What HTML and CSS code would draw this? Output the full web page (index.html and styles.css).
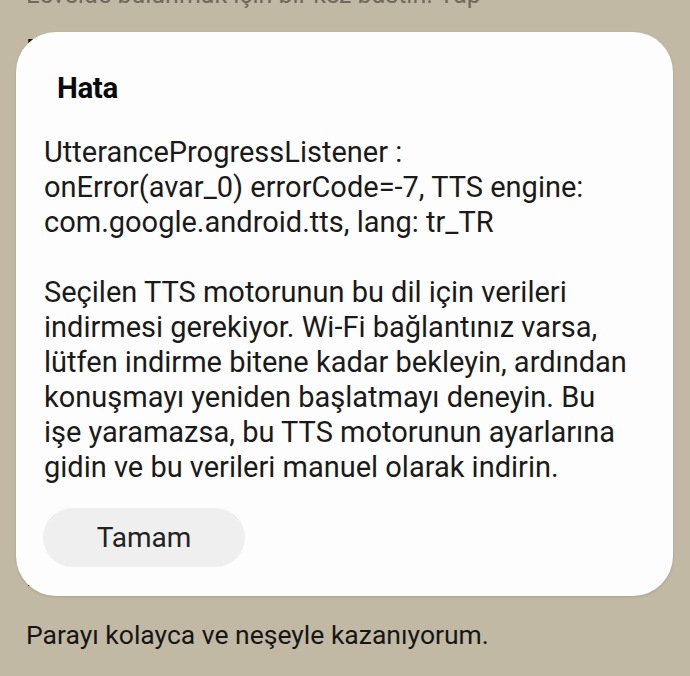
FILE: index.html
```html
<!DOCTYPE html>
<html lang="tr">
<head>
<meta charset="utf-8">
<link rel="stylesheet" href="styles.css">
</head>
<body>
<div class="screen">
  <div class="page">
    <p class="line faded first">Levelde bulunmak için bir kez bastın. Yap</p>
    <p class="line second">Eğer her gün biraz daha çalışırsam</p>
    <p class="line third">Bugün de çok şanslıyım.</p>
    <p class="line fourth">Parayı kolayca ve neşeyle kazanıyorum.</p>
  </div>
  <div class="dialog" role="dialog">
    <h1 class="title">Hata</h1>
    <p class="message">UtteranceProgressListener :<br>onError(avar_0) errorCode=-7, TTS engine:<br>com.google.android.tts, lang: tr_TR<br><br>Seçilen TTS motorunun bu dil için verileri indirmesi gerekiyor. Wi-Fi bağlantınız varsa, lütfen indirme bitene kadar bekleyin, ardından konuşmayı yeniden başlatmayı deneyin. Bu işe yaramazsa, bu TTS motorunun ayarlarına gidin ve bu verileri manuel olarak indirin.</p>
    <div class="actions">
      <button class="btn">Tamam</button>
    </div>
  </div>
</div>
</body>
</html>
```
FILE: styles.css
```css
html, body {
  margin: 0;
  padding: 0;
}
body {
  background: #c1b9a3;
  font-family: Roboto, "Noto Sans", sans-serif;
}
.screen {
  position: relative;
  width: 690px;
  height: 676px;
  overflow: hidden;
}
.page {
  display: flex;
  flex-direction: column;
  padding: 0 26px;
}
.line {
  margin: 0;
  font-size: 26.5px;
  line-height: 34px;
  color: #161616;
  white-space: nowrap;
}
.first {
  margin-top: -22px;
  color: #6e6a5f;
  font-size: 25px;
}
.second {
  margin-top: 19px;
}
.third {
  margin-top: 495px;
}
.fourth {
  margin-top: 24px;
}
.dialog {
  position: absolute;
  left: 16px;
  top: 32px;
  width: 657px;
  height: 564px;
  box-sizing: border-box;
  background: #fdfdfd;
  border-radius: 40px;
  padding: 38px 41px 0 28px;
  box-shadow: 0 1px 3px rgba(0,0,0,0.12);
}
.title {
  margin: 0 0 0 13px;
  font-size: 29.5px;
  line-height: 36px;
  font-weight: 700;
  color: #0a0a0a;
  letter-spacing: -0.4px;
}
.message {
  margin: 29px 0 0 0;
  font-size: 29px;
  line-height: 35px;
  color: #1a1a1a;
}
.actions {
  display: flex;
  margin-top: 23px;
}
.btn {
  width: 202px;
  height: 59px;
  margin-left: -1px;
  border: none;
  border-radius: 30px;
  background: #efefef;
  font-family: Roboto, "Noto Sans", sans-serif;
  font-size: 28px;
  font-weight: 400;
  color: #222;
  padding: 0;
}
```
